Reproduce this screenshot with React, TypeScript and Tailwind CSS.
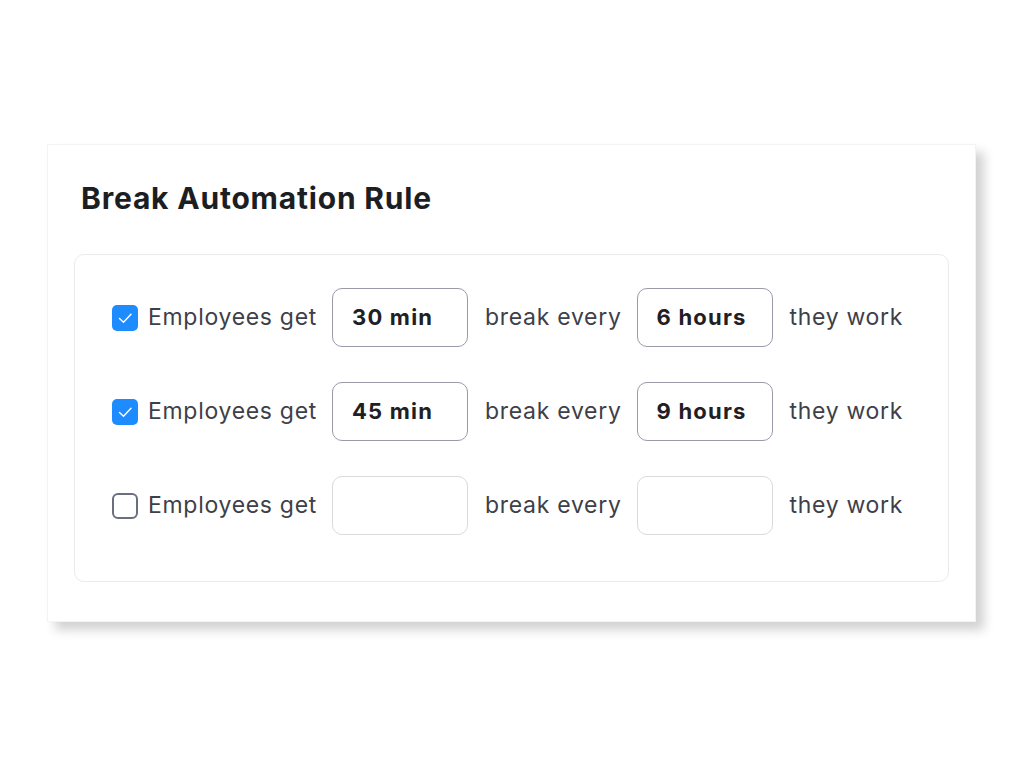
type Rule = { checked: boolean; duration: string; every: string };

const rules: Rule[] = [
  { checked: true, duration: "30 min", every: "6 hours" },
  { checked: true, duration: "45 min", every: "9 hours" },
  { checked: false, duration: "", every: "" },
];

function Check({ checked }: { checked: boolean }) {
  if (!checked) {
    return <div className="w-[26px] h-[26px] shrink-0 rounded-[6px] border-2 border-[#6b6e7d] bg-white" />;
  }
  return (
    <div className="w-[26px] h-[26px] shrink-0 rounded-[5px] bg-[#1e8bff]">
      <svg width="26" height="26" viewBox="0 0 26 26" fill="none">
        <path d="M7.5 13.5l4 3.8 7.5-8" stroke="white" strokeWidth="1.4" strokeLinecap="round" strokeLinejoin="round" />
      </svg>
    </div>
  );
}

function ValueBox({ value }: { value: string }) {
  return (
    <div
      className={
        "w-[136px] h-[59px] shrink-0 rounded-[10px] bg-white flex items-center pl-[19px] text-[22px] font-bold tracking-[1.2px] text-[#1f2024] " +
        (value ? "border-[1.5px] border-[#9c99a8]" : "border-[1.5px] border-[#d9d9de]")
      }
    >
      {value}
    </div>
  );
}

export default function App() {
  return (
    <div
      className="min-h-screen w-full bg-white pt-[144px] pl-[47px]"
      style={{ fontFamily: '"Inter", "Open Sans", sans-serif' }}
    >
      <div className="w-[929px] h-[478px] bg-white border border-[#f3f3f3] shadow-[8px_8px_10px_rgba(0,0,0,0.18)] px-[26px] pt-[35px]">
        <h2 className="pl-[7px] text-[30px] leading-[36px] font-bold tracking-[0.8px] text-[#1d1e22]">
          Break Automation Rule
        </h2>
        <div className="mt-[38px] h-[328px] rounded-[10px] border border-[#ebebee] pl-[37px] pt-[33px] flex flex-col gap-[35px]">
          {rules.map((r, i) => (
            <div key={i} className="flex items-center h-[59px] text-[23px] tracking-[0.7px] text-[#3e3f48]">
              <Check checked={r.checked} />
              <span className="ml-[10px] mr-[15px]">Employees get</span>
              <ValueBox value={r.duration} />
              <span className="ml-[17px] mr-[15px]">break every</span>
              <ValueBox value={r.every} />
              <span className="ml-[17px]">they work</span>
            </div>
          ))}
        </div>
      </div>
    </div>
  );
}
